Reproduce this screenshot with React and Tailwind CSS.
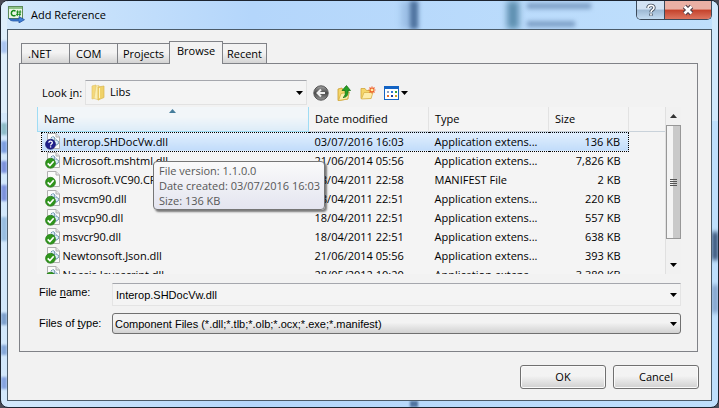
import React from "react";

const files = [
  { name: "Interop.SHDocVw.dll", date: "03/07/2016 16:03", type: "Application extens...", size: "136 KB", kind: "unknown" },
  { name: "Microsoft.mshtml.dll", date: "21/06/2014 05:56", type: "Application extens...", size: "7,826 KB", kind: "dll" },
  { name: "Microsoft.VC90.CRT.manifest", date: "18/04/2011 22:58", type: "MANIFEST File", size: "2 KB", kind: "plain" },
  { name: "msvcm90.dll", date: "18/04/2011 22:51", type: "Application extens...", size: "220 KB", kind: "dll" },
  { name: "msvcp90.dll", date: "18/04/2011 22:51", type: "Application extens...", size: "557 KB", kind: "dll" },
  { name: "msvcr90.dll", date: "18/04/2011 22:51", type: "Application extens...", size: "638 KB", kind: "dll" },
  { name: "Newtonsoft.Json.dll", date: "21/06/2014 05:56", type: "Application extens...", size: "393 KB", kind: "dll" },
  { name: "Noesis.Javascript.dll", date: "28/05/2012 10:20", type: "Application extens...", size: "3,380 KB", kind: "dll" },
];

const tabs = [".NET", "COM", "Projects", "Browse", "Recent"];
const tabWidths = ["w-12", "w-12", "w-[52px]", "w-[54px]", "w-[44px]"];

function AppIcon() {
  return (
    <svg width="17" height="17" viewBox="0 0 17 17" aria-hidden="true">
      <rect x="0.5" y="0.5" width="14" height="12" fill="#e9f6e4" stroke="#5d8a5b" />
      <rect x="1" y="1" width="13" height="2" fill="#8fc487" />
      <path d="M7.5 5.2C6 3.9 3.3 4.6 3.3 7.2S6 10.5 7.5 9.2" fill="none" stroke="#168a1b" strokeWidth="1.5" />
      <path d="M9.7 4.3L9.2 10M12.2 4.3L11.7 10M8.3 6H13.3M8 8.3H13" stroke="#168a1b" strokeWidth="1" />
      <path d="M1 12.5L4 13H11V10.5L16.5 13.7L11 17V15H5Q2 15 1 12.500Z" fill="#3f7fd6" stroke="#1d4d9c" strokeWidth="0.7" />
    </svg>
  );
}

function FolderIcon() {
  return (
    <svg width="14" height="17" viewBox="0 0 14 17" aria-hidden="true">
      <path d="M1 2L5 1V14L1 15Z" fill="#f5d97a" stroke="#e3c468" strokeWidth="0.7" />
      <path d="M5 2L8 1.5V16L3 14.5Z" fill="#fbeeb0" stroke="#e6cc78" strokeWidth="0.7" />
      <path d="M7 3L13 2V13.5L7 16Z" fill="#f0d269" stroke="#d8b450" strokeWidth="0.7" />
      <path d="M8.5 4V14" stroke="#fff4c0" />
    </svg>
  );
}

function FileIcon({ kind }) {
  return (
    <svg width="16" height="17" viewBox="0 0 16 17" className="shrink-0" aria-hidden="true">
      <path d="M2.5 0.5H11L14.5 4V15.5H2.5Z" fill="#fbfbfb" stroke="#b0b0b0" />
      <path d="M11 0.5V4H14.5" fill="#e6e6e6" stroke="#b0b0b0" />
      {kind !== "plain" && (
        <g fill="#dcecf7" stroke="#3f7194">
          <circle cx="11" cy="9.500" r="2.5" strokeDasharray="1.5 0.7" />
          <circle cx="8" cy="5.500" r="1.8" strokeDasharray="1.2 0.6" />
        </g>
      )}
      {kind === "unknown" ? (
        <>
          <circle cx="5.5" cy="11.3" r="5" fill="#20208c" stroke="#0d0d60" strokeWidth="0.6" />
          <path d="M3.8 9.8C3.8 7.7 7.3 7.7 7.3 9.7C7.3 11 5.6 10.9 5.6 12.4M5.6 13.3V14.6" fill="none" stroke="#fff" strokeWidth="1.3" />
        </>
      ) : (
        <>
          <circle cx="5.5" cy="11.3" r="5" fill="#2f951c" stroke="#1f7411" strokeWidth="0.6" />
          <path d="M2.7 11.3L4.9 13.5L8.7 9.3" fill="none" stroke="#fff" strokeWidth="1.7" />
        </>
      )}
    </svg>
  );
}

function Caret() {
  return (
    <svg width="7" height="4" viewBox="0 0 7 4" aria-hidden="true">
      <path d="M0 0H7L3.5 4Z" fill="#000" />
    </svg>
  );
}

function BackIcon() {
  return (
    <svg width="16" height="16" viewBox="0 0 16 16" aria-hidden="true">
      <defs>
        <linearGradient id="back" x2="0" y2="1">
          <stop offset="0" stopColor="#a5a5a5" />
          <stop offset="0.5" stopColor="#4a4a4a" />
          <stop offset="1" stopColor="#999" />
        </linearGradient>
      </defs>
      <circle cx="8" cy="8" r="7.2" fill="url(#back)" stroke="#555" />
      <path d="M12 8H5M8 4.5L4.5 8L8 11.5" fill="none" stroke="#eee" strokeWidth="2" />
    </svg>
  );
}

function UpIcon() {
  return (
    <svg width="15" height="16" viewBox="0 0 15 16" aria-hidden="true">
      <path d="M1 4L5 3L6 5H11V14L2 15.5H1Z" fill="#f5d66a" stroke="#c99c2b" strokeWidth="0.8" />
      <path d="M1.500 15.500L4 8.500L12.500 7L10.500 14Z" fill="#fcefae" stroke="#d5ad42" strokeWidth="0.8" />
      <path d="M6 12.500C8.500 11 8.500 8.500 8 5.500H5L9.500 0.500L13.500 5.500H11C11.500 9.500 10 12.500 6 12.500Z" fill="#27a025" stroke="#12690f" strokeWidth="0.7" />
    </svg>
  );
}

function NewFolderIcon() {
  return (
    <svg width="16" height="14" viewBox="0 0 16 14" aria-hidden="true">
      <path d="M1 2.500H5L6.500 4.500H11V12.500H1Z" fill="#f5d66a" stroke="#d0a53a" strokeWidth="0.8" />
      <path d="M1.500 13L4 6.500H13L11 12.500Z" fill="#fdedaa" stroke="#d8b24a" strokeWidth="0.8" />
      <path d="M12 0.500V7.500M8.500 4H15.500M9.500 1.500L14.500 6.500M14.500 1.500L9.500 6.500" stroke="#f0602a" strokeWidth="1.2" />
      <circle cx="12" cy="4" r="1.3" fill="#fff0a0" />
    </svg>
  );
}

function ViewIcon() {
  return (
    <svg width="15" height="14" viewBox="0 0 15 14" aria-hidden="true">
      <rect x="0.5" y="0.5" width="14" height="13" fill="#fff" stroke="#1464c4" />
      <rect width="15" height="3" fill="#1464c4" />
      <rect x="3" y="5" width="2" height="2" fill="#8ea0c0" />
      <rect x="7" y="5" width="2" height="2" fill="#2a78d8" />
      <rect x="11" y="5" width="2" height="2" fill="#31a336" />
      <rect x="3" y="9" width="2" height="2" fill="#e8702a" />
      <rect x="7" y="9" width="2" height="2" fill="#1d3f9c" />
      <rect x="11" y="9" width="2" height="2" fill="#d0a01c" />
    </svg>
  );
}

function GlassBackdrop() {
  return (
    <div aria-hidden="true" className="absolute inset-0 overflow-hidden rounded-[7px]">
      <span className="absolute top-0 left-0 h-28 w-1.5 bg-[#deeefb]" />
      <span className="absolute top-10 left-0 h-3 w-1.5 bg-[#a9c4f0] blur-[1px]" />
      <span className="absolute top-[122px] left-0 h-3 w-1.5 bg-[#8dbcc8] blur-[1px]" />
      <span className="absolute top-[140px] left-0 h-3 w-1.5 bg-[#7d9fe0] blur-[1px]" />
      <span className="absolute top-[160px] left-0 h-3 w-1.5 bg-[#7d93dc] blur-[1px]" />
      <span className="absolute top-[184px] left-0 h-4 w-1.5 bg-[#7d93dc] blur-[1px]" />
      <span className="absolute top-[216px] left-0 h-6 w-1.5 bg-[#98bde0] blur-[1px]" />
      <span className="absolute top-[312px] left-0 h-3 w-1.5 bg-[#7ea0cc] blur-[1px]" />
      <span className="absolute top-[344px] left-0 h-2.5 w-1.5 bg-[#86a8d8] blur-[1px]" />
      <span className="absolute top-[376px] left-0 h-3 w-1.5 bg-[#86a4e0] blur-[1px]" />
      <span className="absolute top-0 right-0 h-[120px] w-1.5 bg-[#d0e8fc]" />
      <span className="absolute top-[231px] right-0 h-7 w-1.5 bg-[#2f4a70] blur-[2px]" />
      <span className="absolute top-[284px] right-0 h-7 w-1.5 bg-[#7f9fc8] blur-[2px]" />
      <span className="absolute top-0 left-[400px] h-7 w-4 bg-[#7fa5d0] opacity-50 blur-[3px]" />
      <span className="absolute top-0 left-[409px] h-7 w-2 bg-[#4f739f] blur-[2px]" />
      <span className="absolute bottom-0 left-[409px] h-1.5 w-2 bg-[#4f739f] blur-[1px]" />
      <span className="absolute top-0 left-[506px] h-7 w-3 bg-[#5d8fb0] blur-[3px]" />
      <span className="absolute top-0.5 left-[526px] h-1.5 w-16 bg-[#7fa1c8] blur-[2px]" />
      <span className="absolute top-5 left-[526px] h-1.5 w-12 bg-[#7fa1c8] blur-[2px]" />
    </div>
  );
}

function TitleBar() {
  return (
    <header className="relative flex h-7 shrink-0 items-start">
      <div className="flex flex-1 items-center gap-1.5 pt-[5px] pl-px">
        <AppIcon />
        <h1 className="text-[11px] leading-4">Add Reference</h1>
      </div>
      <div className="flex h-[19px] overflow-hidden rounded-b-[5px] border border-t-0 border-[#3c4a5a]">
        <button aria-label="Help" className="flex w-7 items-center justify-center border-r border-[#3c4a5a] bg-linear-to-b from-[#d3e3f4] from-45% via-[#9db8d3] via-50% to-[#c4dcf2]">
          <svg width="12" height="14" viewBox="0 0 12 14">
            <path d="M3 5C3 1.500 9 1.500 9 4.700C9 7 6 6.800 6 9.200M6 10.500V12.700" fill="none" stroke="#475262" strokeWidth="3.4" />
            <path d="M3 5C3 1.500 9 1.500 9 4.700C9 7 6 6.800 6 9.200M6 10.500V12.500" fill="none" stroke="#fff" strokeWidth="1.6" />
          </svg>
        </button>
        <button aria-label="Close" className="flex w-[46px] items-center justify-center bg-linear-to-b from-[#eab0a4] from-45% via-[#c4412a] via-50% to-[#dd7560]">
          <svg width="14" height="12" viewBox="0 0 14 12">
            <path d="M3.500 2.500L10.500 9.500M10.500 2.500L3.500 9.500" stroke="#4f3f48" strokeWidth="4.8" />
            <path d="M3.500 2.500L10.500 9.500M10.500 2.500L3.500 9.500" stroke="#fff" strokeWidth="2.6" />
          </svg>
        </button>
      </div>
    </header>
  );
}

function Tabs() {
  return (
    <div role="tablist" className="relative z-10 -mb-px flex items-end pl-0.5">
      {tabs.map((tab, i) => (
        <button
          key={tab}
          role="tab"
          aria-selected={tab === "Browse"}
          className={`${tabWidths[i]} border-[#808287] text-center text-[11px] leading-4 ${
            tab === "Browse"
              ? "h-[23px] border border-b-0 bg-[#f2f2f2] pb-1"
              : `h-[21px] border border-r-0 bg-linear-to-b from-[#f3f3f3] from-45% to-[#d4d4d4] last:border-r last:border-l-0 ${i < 2 ? "pl-1.5 text-left" : ""}`
          }`}
        >
          {tab}
        </button>
      ))}
    </div>
  );
}

function LookIn() {
  return (
    <div className="flex items-center pl-[22px]">
      <label htmlFor="look-in" className="w-[43px] text-[11px] leading-4 whitespace-nowrap">
        Look <u>i</u>n:
      </label>
      <div className="relative w-[222px]">
        <select id="look-in" className="block h-[25px] w-full appearance-none border border-[#e2e2e2] border-t-[#a5a7ad] bg-[#f4f4f4] pl-6 text-[11px] outline-none">
          <option>Libs</option>
        </select>
        <span className="pointer-events-none absolute inset-0 flex items-center justify-between pr-1 pl-1.5">
          <FolderIcon />
          <Caret />
        </span>
      </div>
      <div className="flex items-center gap-2 pl-1.5">
        <button aria-label="Back"><BackIcon /></button>
        <button aria-label="Up one level"><UpIcon /></button>
        <button aria-label="New folder"><NewFolderIcon /></button>
        <button aria-label="View menu" className="flex items-center gap-0.5">
          <ViewIcon />
          <Caret />
        </button>
      </div>
    </div>
  );
}

function FileList() {
  return (
    <div className="relative flex h-[167px] bg-[#f4f4f4]">
      <div className="min-w-0 flex-1 overflow-hidden">
        <table className="w-full table-fixed border-collapse text-left text-[11px] leading-4">
          <colgroup>
            <col className="w-1" />
            <col className="w-[267px]" />
            <col className="w-[120px]" />
            <col className="w-[120px]" />
            <col className="w-[80px]" />
            <col />
          </colgroup>
          <thead>
            <tr className="h-6 border-b border-[#c9d2da]">
              <th colSpan={2} className="relative border-x border-b border-[#9fdcf4] bg-linear-to-b from-[#f2f6f9] from-40% to-[#dcecf8] pl-1.5 font-normal">
                Name
                <svg className="absolute top-0.5 left-1/2 -ml-1" width="7" height="4" viewBox="0 0 7 4" aria-hidden="true">
                  <path d="M0 4H7L3.5 0Z" fill="#467d9b" />
                </svg>
              </th>
              <th className="border-r border-r-[#e2e2e2] pl-1.5 font-normal">Date modified</th>
              <th className="border-r border-r-[#e2e2e2] pl-1.5 font-normal">Type</th>
              <th className="border-r border-r-[#e2e2e2] pl-1.5 font-normal">Size</th>
              <th />
            </tr>
          </thead>
          <tbody>
            <tr className="h-px"><td colSpan={6} /></tr>
            {files.map((f, i) => {
              const cell = i === 0 ? "border-y border-dotted border-black bg-linear-to-b from-[#e2effd] to-[#c1dcfa]" : "";
              return (
                <tr key={f.name} className="h-[19px] whitespace-nowrap">
                  <td className="p-0" />
                  <td className={`overflow-hidden p-0 ${cell} ${i === 0 ? "border-l" : ""}`}>
                    <span className="flex items-center gap-0.5 pl-[3px]">
                      <FileIcon kind={f.kind} />
                      {f.name}
                    </span>
                  </td>
                  <td className={`p-0 pl-1.5 ${cell}`}>{f.date}</td>
                  <td className={`p-0 pl-1.5 ${cell}`}>{f.type}</td>
                  <td className={`p-0 pr-2 text-right ${cell} ${i === 0 ? "border-r" : ""}`}>{f.size}</td>
                  <td className="p-0" />
                </tr>
              );
            })}
          </tbody>
        </table>
      </div>
      <div aria-hidden="true" className="flex w-4 flex-col items-center border-l border-[#e0e0e0] bg-[#f1f1f1]">
        <span className="flex h-[18px] items-center">
          <svg width="7" height="4" viewBox="0 0 7 4"><path d="M0 4H7L3.5 0Z" fill="#333" /></svg>
        </span>
        <span className="flex w-[15px] flex-1 flex-col items-center justify-center gap-px border border-[#979797] bg-linear-to-r from-[#f4f4f4] from-45% to-[#c9c9c9] to-50%">
          <i className="h-px w-[7px] bg-[#555]" />
          <i className="h-px w-[7px] bg-[#555]" />
          <i className="h-px w-[7px] bg-[#555]" />
          <i className="h-px w-[7px] bg-[#555]" />
        </span>
        <span className="flex h-[35px] items-end pb-[7px]">
          <Caret />
        </span>
      </div>
      <div role="tooltip" className="absolute top-[54px] left-[116px] rounded-sm border border-[#767676] bg-linear-to-b from-[#fafafa] to-[#e4e5f0] py-px pr-1 pl-[5px] text-[11px] leading-[15px] whitespace-nowrap text-[#575757] shadow-[2px_2px_2px_rgba(0,0,0,0.5)]">
        <p>File version: 1.1.0.0</p>
        <p>Date created: 03/07/2016 16:03</p>
        <p>Size: 136 KB</p>
      </div>
    </div>
  );
}

function Fields() {
  return (
    <div className="grid grid-cols-[73px_1fr] gap-y-[7px] pt-[9px] pl-[19px] font-['Liberation_Sans',Arial,sans-serif] text-[11px] leading-4">
      <label htmlFor="file-name" className="pt-px">
        File <u>n</u>ame:
      </label>
      <div className="relative">
        <input id="file-name" defaultValue="Interop.SHDocVw.dll" className="block h-[23px] w-full border border-[#e4e4e4] border-t-[#a5a7ad] bg-[#f4f4f4] pl-[3px] outline-none" />
        <span className="pointer-events-none absolute inset-y-0 right-1 flex items-center"><Caret /></span>
      </div>
      <label htmlFor="file-type" className="pt-0.5">
        Files of <u>t</u>ype:
      </label>
      <div className="relative">
        <select id="file-type" className="block h-[21px] w-full appearance-none rounded-[3px] border border-[#707070] bg-linear-to-b from-[#f3f3f3] from-45% to-[#d2d2d2] pl-0.5 outline-none">
          <option>Component Files (*.dll;*.tlb;*.olb;*.ocx;*.exe;*.manifest)</option>
        </select>
        <span className="pointer-events-none absolute inset-y-0 right-1 flex items-center"><Caret /></span>
      </div>
    </div>
  );
}

function PushButton({ children }) {
  return (
    <button className="h-6 w-[86px] rounded-[3px] border border-[#707070] bg-linear-to-b from-[#f3f3f3] from-45% to-[#d0d0d0] text-[11px] leading-4 shadow-[inset_0_0_0_1px_#fafafa]">
      {children}
    </button>
  );
}

export default function App() {
  return (
    <div className="min-h-screen bg-[#4a4a55] font-['Open_Sans','Noto_Sans',sans-serif] text-black">
      <main className="relative flex min-h-screen flex-col rounded-lg border border-[#1c2430] bg-linear-to-r from-[#d3e8fb] via-[#b4d6fb] via-35% to-[#bfdffc] px-1.5 pb-1.5">
        <GlassBackdrop />
        <TitleBar />
        <section className="relative flex flex-1 flex-col border border-[#4b5b69] bg-[#f2f2f2] pt-[11px] pr-3 pb-[11px] pl-[11px]">
          <Tabs />
          <div role="tabpanel" className="mr-px flex flex-col border border-[#808287] pt-4 pr-4 pb-[17px]">
            <LookIn />
            <div className="pt-0.5 pl-[17px]">
              <FileList />
            </div>
            <Fields />
          </div>
          <div className="mt-auto flex justify-end gap-[7px]">
            <PushButton>OK</PushButton>
            <PushButton>Cancel</PushButton>
          </div>
        </section>
      </main>
    </div>
  );
}
